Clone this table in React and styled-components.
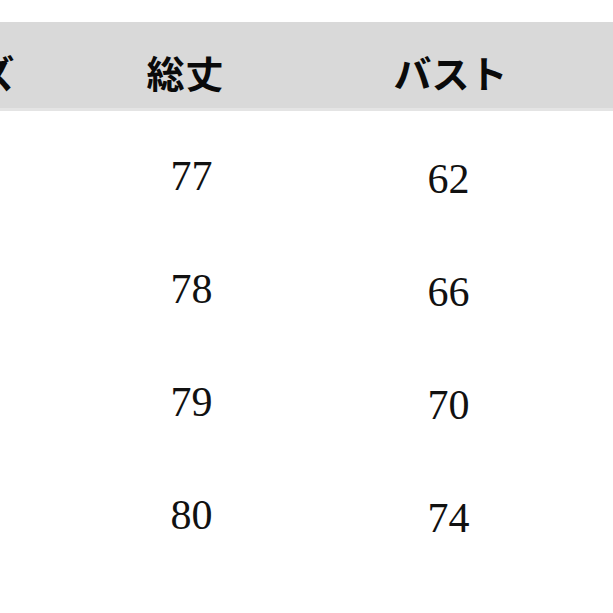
import React from "react";
import styled, {createGlobalStyle} from "styled-components";

const Global = createGlobalStyle`
  html, body {
    margin: 0;
    padding: 0;
    background: #ffffff;
    overflow: hidden;
  }
`;

const Page = styled.div`
  width: 613px;
  height: 613px;
  overflow: hidden;
  padding-top: 22px;
  box-sizing: border-box;
`;

const Table = styled.div`
  display: grid;
  grid-template-columns: 204px 257px 257px 257px;
  margin-left: -144px;
  width: 975px;
`;

const HeadCell = styled.div`
  height: 89px;
  box-sizing: border-box;
  background: #d9d9d9;
  border-bottom: 3px solid #e4e4e4;
  display: flex;
  align-items: center;
  justify-content: center;
  padding-top: 12px;
  padding-left: ${(p) => (p.$dx > 0 ? p.$dx * 2 : 0)}px;
  padding-right: ${(p) => (p.$dx < 0 ? -p.$dx * 2 : 0)}px;
  margin-bottom: 8px;
  font-family: "Noto Sans CJK JP", "Noto Sans", sans-serif;
  font-weight: 700;
  font-size: 38px;
  color: #0a0a0a;
  letter-spacing: ${(p) => p.$spacing || 0}px;
`;

const Cell = styled.div`
  height: 113px;
  display: flex;
  align-items: center;
  justify-content: center;
  padding-top: ${(p) => p.$dy || 0}px;
  padding-left: 6px;
  box-sizing: border-box;
  font-family: "Liberation Serif", "Times New Roman", serif;
  font-size: 42px;
  color: #111111;
`;

const headers = [
  {label: "サイズ", dx: 0},
  {label: "総丈", dx: -3, spacing: 1},
  {label: "バスト", dx: 5},
  {label: "", dx: 0},
];

const rows = [
  ["S", "77", "62", ""],
  ["M", "78", "66", ""],
  ["L", "79", "70", ""],
  ["XL", "80", "74", ""],
];

export default function App() {
  return (
    <>
      <Global />
      <Page>
        <Table>
          {headers.map((h, i) => (
            <HeadCell key={i} $dx={h.dx} $spacing={h.spacing}>
              {h.label}
            </HeadCell>
          ))}
          {rows.map((row, i) =>
            row.map((value, j) => (
              <Cell key={`${i}-${j}`} $dy={j === 2 ? 6 : 0}>
                {j === 0 || j === 3 ? "" : value}
              </Cell>
            ))
          )}
        </Table>
      </Page>
    </>
  );
}
